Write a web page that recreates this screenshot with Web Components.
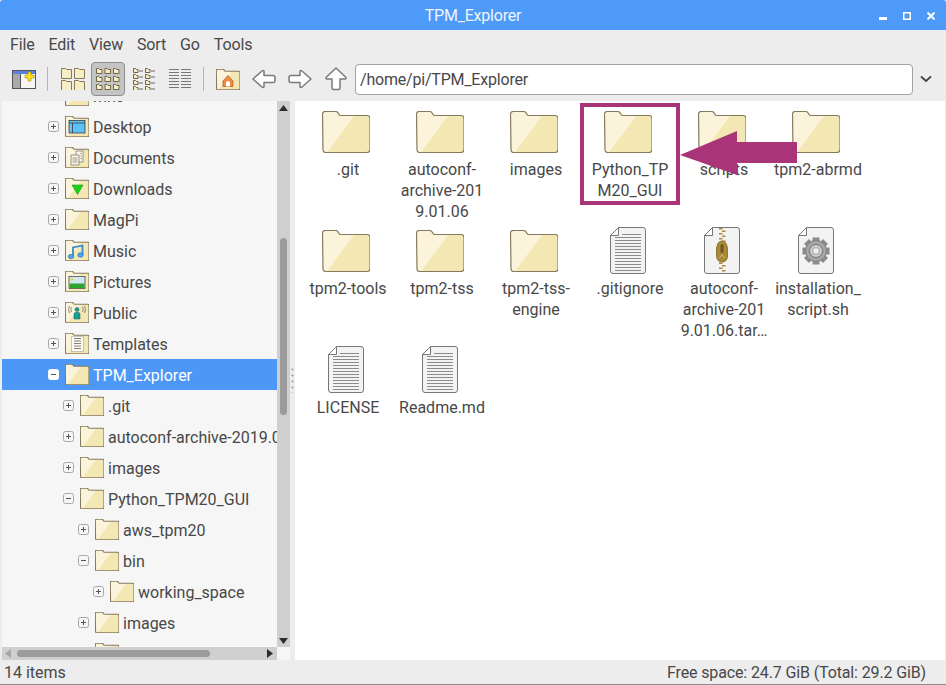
<!DOCTYPE html>
<html>
<head>
<meta charset="utf-8">
<title>TPM_Explorer</title>
<style>
  html, body { margin: 0; height: 100%; background: #ededed; overflow: hidden; }
  body { font: 16px/21px Roboto, "Liberation Sans", sans-serif; color: #484848; }
</style>
</head>
<body>
<file-window>
  <title-bar>TPM_Explorer</title-bar>
  <menu-bar>
    <span>File</span><span>Edit</span><span>View</span><span>Sort</span><span>Go</span><span>Tools</span>
  </menu-bar>
  <tool-bar path="/home/pi/TPM_Explorer"></tool-bar>
  <split-pane>
    <side-pane slot="side">
      <tree-row level="0" state="plus">mnc</tree-row>
      <tree-row level="0" state="plus" badge="desktop">Desktop</tree-row>
      <tree-row level="0" state="plus" badge="documents">Documents</tree-row>
      <tree-row level="0" state="plus" badge="downloads">Downloads</tree-row>
      <tree-row level="0" state="plus">MagPi</tree-row>
      <tree-row level="0" state="plus" badge="music">Music</tree-row>
      <tree-row level="0" state="plus" badge="pictures">Pictures</tree-row>
      <tree-row level="0" state="plus" badge="public">Public</tree-row>
      <tree-row level="0" state="plus" badge="templates">Templates</tree-row>
      <tree-row level="0" state="minus" selected>TPM_Explorer</tree-row>
      <tree-row level="1" state="plus">.git</tree-row>
      <tree-row level="1" state="plus">autoconf-archive-2019.01.06</tree-row>
      <tree-row level="1" state="plus">images</tree-row>
      <tree-row level="1" state="minus">Python_TPM20_GUI</tree-row>
      <tree-row level="2" state="plus">aws_tpm20</tree-row>
      <tree-row level="2" state="minus">bin</tree-row>
      <tree-row level="3" state="plus">working_space</tree-row>
      <tree-row level="2" state="plus">images</tree-row>
      <tree-row level="2" state="plus"></tree-row>
    </side-pane>
    <file-grid slot="main">
      <file-item>.git</file-item>
      <file-item>autoconf-<br>archive-201<br>9.01.06</file-item>
      <file-item>images</file-item>
      <file-item>Python_TP<br>M20_GUI</file-item>
      <file-item>scripts</file-item>
      <file-item>tpm2-abrmd</file-item>
      <file-item>tpm2-tools</file-item>
      <file-item>tpm2-tss</file-item>
      <file-item>tpm2-tss-<br>engine</file-item>
      <file-item kind="text">.gitignore</file-item>
      <file-item kind="zip">autoconf-<br>archive-201<br>9.01.06.tar…</file-item>
      <file-item kind="script">installation_<br>script.sh</file-item>
      <file-item kind="text">LICENSE</file-item>
      <file-item kind="text">Readme.md</file-item>
    </file-grid>
  </split-pane>
  <status-bar>
    <span>14 items</span>
    <span class="free">Free space: 24.7 GiB (Total: 29.2 GiB)</span>
  </status-bar>
</file-window>

<script>
const BADGES = {
  desktop: `<rect x="8" y="9" width="32" height="25" fill="#5ec0f8" stroke="#333" stroke-width="1.500"/><path d="M8 14H40M15 14V34" stroke="#333" stroke-width="1.500"/><path d="M11 20h1M11 26h1" stroke="#fff" stroke-width="2"/>`,
  documents: `<path d="M22 8h14v22h-14z" fill="#fbf6e2" stroke="#777" stroke-width="1.500"/><path d="M12 16h16v20h-16z" fill="#fbf6e2" stroke="#777" stroke-width="1.500"/><path d="M15 22h10M15 26h10M15 30h10M30 13h3M31 18h3M31 23h3" stroke="#777" stroke-width="1.500"/>`,
  downloads: `<path d="M14 14H36L25 33Z" fill="#18d218" stroke="#127a12"/><path d="M21 14h8v5h-8z" fill="#18d218"/>`,
  music: `<path d="M16 33V15L35 11V30" fill="none" stroke="#2f88d2" stroke-width="3.500"/><ellipse cx="12" cy="33" rx="5.500" ry="4.500" fill="#4aa6ee" stroke="#1c5f97"/><ellipse cx="31" cy="30" rx="5.500" ry="4.500" fill="#4aa6ee" stroke="#1c5f97"/>`,
  pictures: `<rect x="8" y="11" width="32" height="24" fill="#cfe8f4" stroke="#444" stroke-width="1.500"/><path d="M9 25H39V34H9Z" fill="#2ea32e"/><circle cx="14" cy="17" r="2.500" fill="#e8d818"/>`,
  public: `<circle cx="24" cy="15" r="4" fill="#1a9d94" stroke="#0d5f59"/><path d="M18 34V24q0-3 3-3h6q3 0 3 3V34Z" fill="#1a9d94" stroke="#0d5f59"/><path d="M13 10q-3 5 0 10M9 8q-4 7 0 14M35 10q3 5 0 10M39 8q4 7 0 14" fill="none" stroke="#666" stroke-width="1.500"/>`,
  templates: `<rect x="13" y="7" width="24" height="30" fill="#fdfbf0" stroke="#777" stroke-dasharray="2 2" stroke-width="1.500"/><path d="M18 11h14M18 16h14M18 21h14M18 26h14M18 31h14" stroke="#555" stroke-width="1.500"/>`,
  home: `<path d="M14 24L24 13L34 24V35H14Z" fill="#ee8b45" stroke="#b85b1a" stroke-width="1.500"/><path d="M20 35V28q0-4 4-4t4 4V35Z" fill="#fff"/>`
};

const folderIcon = (w, badge) => `
  <svg width="${w}" height="${w * 42 / 48}" viewBox="0 0 48 42">
    <path d="M.5 3.500q0-3 3-3h10q2 0 3 2l.5 1q.5 1 2 1h26q3 0 3 3v31q0 3-3 3h-41q-3 0-3-3z" fill="#fbf4da"/>
    <path d="M5 41.500L32 5h12.500q3 0 3 3v30.500q0 3-3 3z" fill="#f3e8b4"/>
    <path d="M.5 3.500q0-3 3-3h10q2 0 3 2l.5 1q.5 1 2 1h26q3 0 3 3v31q0 3-3 3h-41q-3 0-3-3z" fill="none" stroke="#857a5c" stroke-width="1.200" vector-effect="non-scaling-stroke"/>
    ${badge ? BADGES[badge] : ""}
  </svg>`;

const pageLines = () => {
  let d = "";
  for (let y = 7.5; y < 44; y += 3) d += `M${y < 10 ? 12 : 5} ${y}H31`;
  return `<path d="${d}" stroke="#8b8b8b" stroke-width="1"/>`;
};

const zipper = () => {
  let teeth = "";
  for (let y = 1; y < 15; y += 2.5) teeth += `<rect x="${y % 5 < 2 ? 15 : 18}" y="${y}" width="3.500" height="1.500" fill="#a98b3b"/>`;
  for (let y = 33; y < 44; y += 2.5) teeth += `<rect x="${y % 5 < 2 ? 15 : 18}" y="${y}" width="3.500" height="1.500" fill="#a98b3b"/>`;
  return teeth + `<path d="M12.500 24q0-10 5.500-10t5.500 10v4q0 7-5.500 7t-5.500-7z" fill="#a88a3a" stroke="#8c7330"/><rect x="16.500" y="17" width="3" height="9" rx="1.500" fill="#6b5724"/><path d="M15.500 31l2.500-3.500 2.500 3.500" fill="none" stroke="#d0b66e"/>`;
};

const gear = () => {
  let teeth = "";
  for (let a = 0; a < 360; a += 45) teeth += `<rect x="14.500" y="10.500" width="7" height="6" fill="#8c8c8c" transform="rotate(${a} 18 24)"/>`;
  return teeth + `<circle cx="18" cy="24" r="10.500" fill="#a6a6a6" stroke="#808080"/><circle cx="18" cy="24" r="6.500" fill="#d2d2d2" stroke="#6c6c6c"/><rect x="15" y="21" width="6" height="6" fill="#f2f2f2" stroke="#888" stroke-width=".7"/>`;
};

const docIcon = (content) => `
  <svg width="36" height="47" viewBox="0 0 36 47">
    <path d="M8.500.5H33q2.500 0 2.500 2.500V44q0 2.500-2.500 2.500H3q-2.500 0-2.500-2.500V8.500Z" fill="#f3f3f3" stroke="#777"/>
    <path d="M8.500.5V8.500H.5Z" fill="#fff" stroke="#777"/>
    ${content}
  </svg>`;

const VIEW_ICONS = {
  big: () => {
    let out = "";
    for (const [x, y] of [[0, 0], [13, 0], [0, 12], [13, 12]])
      out += `<path d="M${x + .5} ${y + .5}h4l1 1h5v9h-10z" fill="#f7eec4" stroke="#857a5c"/>`;
    return out;
  },
  small: () => {
    let out = "";
    for (const y of [0, 8, 16]) for (const x of [0, 8.500, 17])
      out += `<path d="M${x + .5} ${y + .5}h2l1 1h2.500v4h-5.500z" fill="#f7eec4" stroke="#6e6448"/>`;
    return out;
  },
  compact: () => {
    let out = "";
    for (const y of [0, 6, 12, 18]) for (const x of [0, 12])
      out += `<path d="M${x + .5} ${y + .5}h2l1 1h1.500v3h-4.500z" fill="#f7eec4" stroke="#6e6448"/><path d="M${x + 6} ${y + 3}h4" stroke="#666"/>`;
    return out;
  },
  list: () => {
    let out = "";
    for (let y = 1.5; y < 22; y += 3) out += `<path d="M0 ${y}h10M12 ${y}h10" stroke="#777"/>`;
    return out;
  }
};

const viewIcon = (name) => `<svg width="24" height="22" viewBox="0 0 24 22">${VIEW_ICONS[name]()}</svg>`;

const arrowIcon = (points, w = 24, h = 20) => `
  <svg width="${w}" height="${h}" viewBox="0 0 ${w} ${h}">
    <path d="${points}" fill="#fff" stroke="#7a7a7a" stroke-width="1.500" stroke-linejoin="round"/>
  </svg>`;

class BoxElement extends HTMLElement {
  constructor() {
    super();
    this.attachShadow({ mode: "open" });
  }

  connectedCallback() {
    this.shadowRoot.innerHTML = `<style>${this.styles}</style>${this.markup}`;
  }
}

class FileWindow extends BoxElement {
  get styles() {
    return `
      :host {
        display: flex;
        flex-direction: column;
        height: 685px;
        background: #ededed;
        border-bottom: 1px solid #8d8d8d;
        box-sizing: border-box;
      }
    `;
  }

  get markup() {
    return `<slot></slot>`;
  }
}

class TitleBar extends BoxElement {
  get styles() {
    return `
      :host {
        display: grid;
        grid-template-columns: 1fr auto;
        height: 30px;
        align-items: center;
        background: #4d9af8;
        color: #eef5ff;
        border-radius: 3px 3px 0 0;
        position: relative;
        letter-spacing: -.2px;
      }
      .name { text-align: center; }
      .ctl {
        position: absolute;
        right: 11px;
        top: 12px;
        display: flex;
        gap: 16px;
      }
      svg { display: block; }
    `;
  }

  get markup() {
    return `
      <div class="name"><slot></slot></div>
      <div class="ctl">
        <svg width="8" height="8"><rect y="5" width="8" height="3" fill="#fff"/></svg>
        <svg width="8" height="8"><rect x=".75" y=".75" width="6.500" height="6.500" fill="none" stroke="#fff" stroke-width="1.500"/></svg>
        <svg width="8" height="8"><path d="M.5.5L7.500 7.500M7.500.5L.5 7.500" stroke="#fff" stroke-width="2"/></svg>
      </div>
    `;
  }
}

class MenuBar extends BoxElement {
  get styles() {
    return `
      :host {
        display: flex;
        height: 30px;
        align-items: center;
        gap: 14px;
        padding-left: 10px;
        padding-bottom: 2px;
        box-sizing: border-box;
        letter-spacing: -.15px;
      }
    `;
  }

  get markup() {
    return `<slot></slot>`;
  }
}

class ToolBar extends BoxElement {
  get styles() {
    return `
      :host {
        display: flex;
        align-items: center;
        height: 41px;
        padding: 0 0 3px 6px;
        box-sizing: border-box;
      }
      .btn {
        width: 36px;
        height: 34px;
        display: flex;
        align-items: center;
        justify-content: center;
        box-sizing: border-box;
        flex: none;
      }
      .btn.on {
        background: #c4c4c4;
        border: 1px solid #8f8f8f;
        border-radius: 4px;
        width: 34px;
        margin-right: 2px;
      }
      .sep { width: 1px; height: 24px; background: #b5b5b5; flex: none; }
      .s1 { margin: 0 7px 0 5px; }
      .s2 { margin: 0 6px 0 4px; }
      .path {
        width: 558px;
        height: 31px;
        margin-left: 1px;
        box-sizing: border-box;
        flex: none;
        background: #fff;
        border: 1px solid #a3a3a3;
        border-radius: 4px;
        padding-left: 4px;
        line-height: 29px;
        letter-spacing: -.2px;
      }
      .drop { margin-left: 7px; display: block; }
      svg { display: block; }
    `;
  }

  get markup() {
    return `
      <div class="btn">
        <svg width="24" height="19" viewBox="0 0 24 19">
          <rect x=".5" y=".5" width="23" height="18" fill="#e8e8e8" stroke="#555"/>
          <path d="M9 4H23V18H9Z" fill="#f6f6f6"/><path d="M1 4H8V18H1Z" fill="#a9a9a9"/>
          <path d="M8.500 4V18" stroke="#555"/>
          <rect x="1" y="1" width="22" height="3" fill="#5c7fe6"/>
          <path d="M16 2h3v3h3v3h-3v3h-3V8h-3V5h3Z" fill="#ffe21f" stroke="#a08f16" stroke-width=".6"/>
        </svg>
      </div>
      <div class="sep s1"></div>
      <div class="btn">${viewIcon("big")}</div>
      <div class="btn on">${viewIcon("small")}</div>
      <div class="btn">${viewIcon("compact")}</div>
      <div class="btn">${viewIcon("list")}</div>
      <div class="sep s2"></div>
      <div class="btn">${folderIcon(24, "home")}</div>
      <div class="btn">${arrowIcon("M1 10L10 2q1-1 2 0v4.500h9q2 0 2 2v3q0 2-2 2h-9V18q-1 1-2 0Z")}</div>
      <div class="btn">${arrowIcon("M23 10L14 2q-1-1-2 0v4.500H3q-2 0-2 2v3q0 2 2 2h9V18q1 1 2 0Z")}</div>
      <div class="btn">${arrowIcon("M11 1L1 10.500q-.5 1 .5 1.500H7v9q0 1.500 1.500 1.500h5q1.500 0 1.500-1.500v-9h5.500q1-.5.5-1.500Z", 22, 24)}</div>
      <div class="path">${this.getAttribute("path")}</div>
      <svg class="drop" width="12" height="8" viewBox="0 0 12 8"><path d="M1 1.500L6 6L11 1.500" fill="none" stroke="#444" stroke-width="1.800"/></svg>
    `;
  }
}

class SplitPane extends BoxElement {
  get styles() {
    return `
      :host {
        display: grid;
        grid-template-columns: 288px 5px 1fr;
        height: 559px;
        padding-left: 2px;
        padding-right: 1px;
        flex: none;
      }
      .grip {
        background:
          radial-gradient(circle at 1.500px 1.500px, #b9b9b9 1px, transparent 1.100px) 0 267px / 3px 6px repeat-y;
        background-size: 3px 6px;
        margin-left: 1px;
        position: relative;
      }
      .grip::after {
        content: "";
        position: absolute;
        left: 0;
        right: 0;
        top: 0;
        height: 266px;
        background: #ededed;
      }
      .grip::before {
        content: "";
        position: absolute;
        left: 0;
        right: 0;
        top: 292px;
        bottom: 0;
        background: #ededed;
      }
    `;
  }

  get markup() {
    return `<slot name="side"></slot><div class="grip"></div><slot name="main"></slot>`;
  }
}

class SidePane extends BoxElement {
  get styles() {
    return `
      :host {
        display: grid;
        grid-template-columns: 275px 13px;
        grid-template-rows: 546px 13px;
        background: #f6f6f6;
      }
      .tree { overflow: hidden; }
      .rows { margin-top: -21px; }
      .v, .h { background: #cfcfcf; display: flex; }
      .v { flex-direction: column; align-items: center; position: relative; }
      .h { align-items: center; position: relative; }
      .thumb { background: #9b9b9b; border-radius: 4px; }
      .v .thumb { width: 7px; height: 177px; margin-top: 137px; }
      .h .thumb { height: 7px; width: 193px; margin-left: 15px; }
      .arrow { position: absolute; display: block; }
    `;
  }

  get markup() {
    return `
      <div class="tree"><div class="rows"><slot></slot></div></div>
      <div class="v">
        <svg class="arrow" style="top:4px" width="9" height="6"><path d="M0 6L4.500 0L9 6Z" fill="#2e2e2e"/></svg>
        <div class="thumb"></div>
        <svg class="arrow" style="bottom:3px" width="9" height="6"><path d="M0 0L4.500 6L9 0Z" fill="#2e2e2e"/></svg>
      </div>
      <div class="h">
        <svg class="arrow" style="left:3px" width="6" height="9"><path d="M6 0L0 4.500L6 9Z" fill="#a6a6a6"/></svg>
        <div class="thumb"></div>
        <svg class="arrow" style="right:4px" width="6" height="9"><path d="M0 0L6 4.500L0 9Z" fill="#2e2e2e"/></svg>
      </div>
      <div></div>
    `;
  }
}

class TreeRow extends BoxElement {
  get styles() {
    const level = Number(this.getAttribute("level")) || 0;
    return `
      :host {
        display: flex;
        align-items: center;
        height: 31px;
        padding-left: ${46 + level * 15}px;
        box-sizing: border-box;
        white-space: nowrap;
      }
      :host([selected]) { background: #4d98f6; color: #fff; }
      svg { display: block; flex: none; }
      .exp { margin-right: 6px; }
      .label { margin-left: 4px; padding-top: 2px; }
    `;
  }

  get markup() {
    const minus = this.getAttribute("state") === "minus";
    const selected = this.hasAttribute("selected");
    return `
      <svg class="exp" width="11" height="11">
        <rect x=".5" y=".5" width="10" height="10" rx="2" fill="${selected ? "#fff" : "none"}" stroke="${selected ? "#fff" : "#a8a8a8"}"/>
        <path d="M3 5.500H8${minus ? "" : "M5.500 3V8"}" stroke="#555"/>
      </svg>
      ${folderIcon(24, this.getAttribute("badge"))}
      <span class="label"><slot></slot></span>
    `;
  }
}

class FileGrid extends BoxElement {
  get styles() {
    return `
      :host {
        display: grid;
        grid-template-columns: repeat(6, 94px);
        grid-auto-rows: 119px;
        align-content: start;
        padding: 7px 0 0 4px;
        background: #fff;
        position: relative;
      }
      .mark {
        position: absolute;
        left: 285px;
        top: 2px;
        width: 100px;
        height: 102px;
        box-sizing: border-box;
        border: 4px solid #a93578;
      }
      .arrow { position: absolute; left: 385px; top: 30px; }
    `;
  }

  get markup() {
    return `
      <slot></slot>
      <div class="mark"></div>
      <svg class="arrow" width="117" height="44" viewBox="0 0 117 44">
        <path d="M0 24L57 0V11H117V32H57V44Z" fill="#a93578"/>
      </svg>
    `;
  }
}

class FileItem extends BoxElement {
  get styles() {
    return `
      :host {
        display: flex;
        flex-direction: column;
        align-items: center;
        text-align: center;
        white-space: nowrap;
      }
      .icon {
        height: 48px;
        display: flex;
        align-items: center;
        margin-bottom: 3px;
      }
      .icon.doc { align-items: flex-start; }
      .text { margin-left: 4px; }
      svg { display: block; }
    `;
  }

  get markup() {
    const kind = this.getAttribute("kind");
    const icons = {
      text: () => docIcon(pageLines()),
      zip: () => docIcon(zipper()),
      script: () => docIcon(gear())
    };
    const icon = kind ? icons[kind]() : folderIcon(48);
    return `<div class="icon ${kind ? "doc" : ""}">${icon}</div><div class="text"><slot></slot></div>`;
  }
}

class StatusBar extends BoxElement {
  get styles() {
    return `
      :host {
        display: flex;
        justify-content: space-between;
        align-items: center;
        height: 24px;
        padding: 0 20px 0 4px;
        flex: none;
      }
      ::slotted(.free) { letter-spacing: -.13px; }
    `;
  }

  get markup() {
    return `<slot></slot>`;
  }
}

customElements.define("file-window", FileWindow);
customElements.define("title-bar", TitleBar);
customElements.define("menu-bar", MenuBar);
customElements.define("tool-bar", ToolBar);
customElements.define("split-pane", SplitPane);
customElements.define("side-pane", SidePane);
customElements.define("tree-row", TreeRow);
customElements.define("file-grid", FileGrid);
customElements.define("file-item", FileItem);
customElements.define("status-bar", StatusBar);
</script>
</body>
</html>
